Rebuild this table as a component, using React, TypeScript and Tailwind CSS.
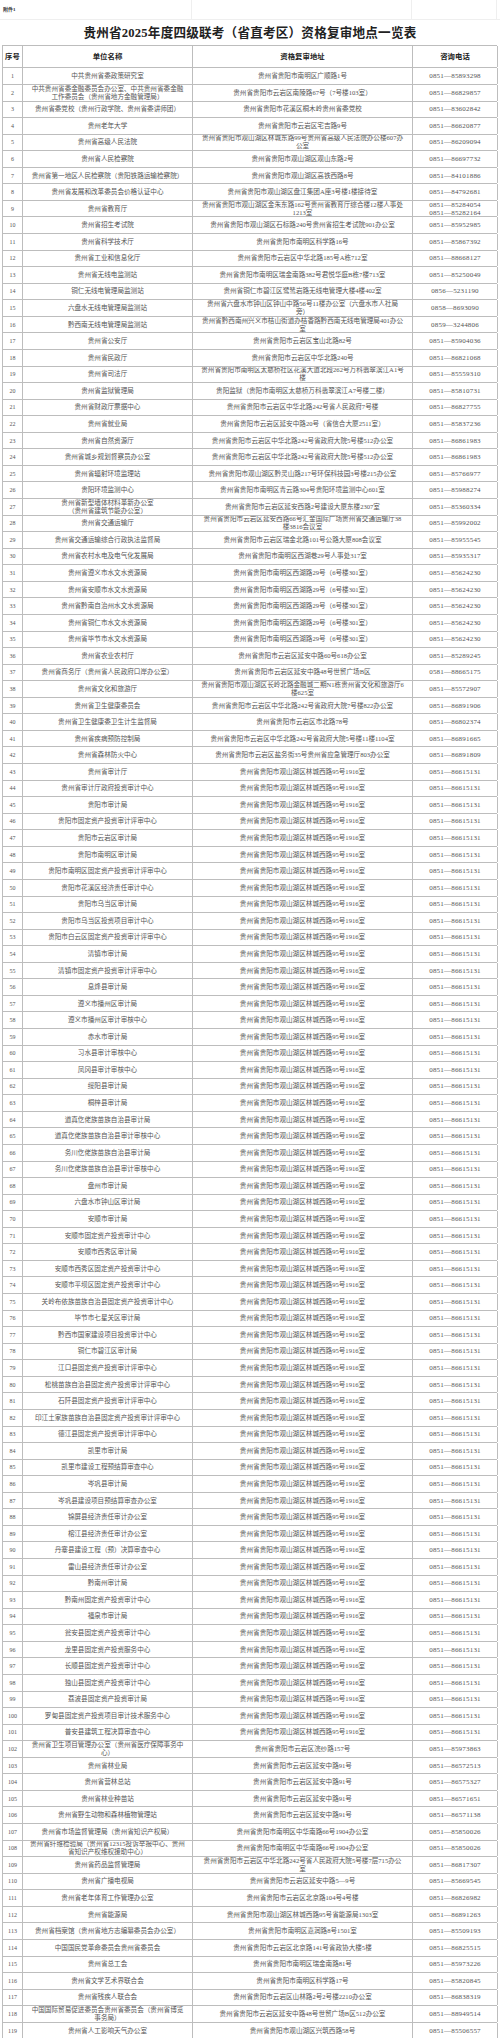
import type { ReactNode } from 'react';

type Row = [string, string, string];

const AUDIT_ADDR = '贵州省贵阳市观山湖区林城西路95号1916室';
const AUDIT_TEL = '0851—86615131';
const WATER_ADDR = '贵州省贵阳市南明区西湖路29号（6号楼301室）';
const FOREST_ADDR = '贵州省贵阳市云岩区延安中路91号';

// 43–101 share the provincial audit office address
const AUDIT_UNITS = [
  '贵州省审计厅',
  '贵州省审计厅政府投资审计中心',
  '贵阳市审计局',
  '贵阳市固定资产投资审计评审中心',
  '贵阳市云岩区审计局',
  '贵阳市南明区审计局',
  '贵阳市南明区固定资产投资审计评审中心',
  '贵阳市花溪区经济责任审计中心',
  '贵阳市乌当区审计局',
  '贵阳市乌当区投资项目审计中心',
  '贵阳市白云区固定资产投资审计评审中心',
  '清镇市审计局',
  '清镇市固定资产投资审计评审中心',
  '息烽县审计局',
  '遵义市播州区审计局',
  '遵义市播州区审计审核中心',
  '赤水市审计局',
  '习水县审计审核中心',
  '凤冈县审计审核中心',
  '绥阳县审计局',
  '桐梓县审计局',
  '道真仡佬族苗族自治县审计局',
  '道真仡佬族苗族自治县审计审核中心',
  '务川仡佬族苗族自治县审计局',
  '务川仡佬族苗族自治县审计审核中心',
  '盘州市审计局',
  '六盘水市钟山区审计局',
  '安顺市审计局',
  '安顺市固定资产投资审计中心',
  '安顺市西秀区审计局',
  '安顺市西秀区固定资产投资审计中心',
  '安顺市平坝区固定资产投资审计中心',
  '关岭布依族苗族自治县固定资产投资审计中心',
  '毕节市七星关区审计局',
  '黔西市国家建设项目投资审计中心',
  '铜仁市碧江区审计局',
  '江口县固定资产投资审计评审中心',
  '松桃苗族自治县固定资产投资审计评审中心',
  '石阡县固定资产投资审计评审中心',
  '印江土家族苗族自治县固定资产投资审计评审中心',
  '德江县固定资产投资审计评审中心',
  '凯里市审计局',
  '凯里市建设工程预结算审查中心',
  '岑巩县审计局',
  '岑巩县建设项目预结算审查办公室',
  '锦屏县经济责任审计办公室',
  '榕江县经济责任审计办公室',
  '丹寨县建设工程（预）决算审查中心',
  '雷山县经济责任审计办公室',
  '黔南州审计局',
  '黔南州固定资产投资审计中心',
  '福泉市审计局',
  '瓮安县固定资产投资审计中心',
  '龙里县固定资产投资服务中心',
  '长顺县固定资产投资审计中心',
  '独山县固定资产投资审计中心',
  '荔波县固定资产投资审计局',
  '罗甸县固定资产投资项目审计技术服务中心',
  '普安县建筑工程决算审查中心',
];

const ROWS: Row[] = [
  ['中共贵州省委政策研究室', '贵州省贵阳市南明区广顺路1号', '0851—85893298'],
  ['中共贵州省委金融委员会办公室、中共贵州省委金融\n工作委员会（贵州省地方金融管理局）', '贵州省贵阳市云岩区南陵路67号（7号楼103室）', '0851—86829857'],
  ['贵州省委党校（贵州行政学院、贵州省委讲师团）', '贵州省贵阳市花溪区桐木岭贵州省委党校', '0851—83602842'],
  ['贵州老年大学', '贵州省贵阳市云岩区宅吉路9号', '0851—86620877'],
  ['贵州省高级人民法院', '贵州省贵阳市观山湖区林城东路99号贵州省高级人民法院办公楼607办\n公室', '0851—86209094'],
  ['贵州省人民检察院', '贵州省贵阳市观山湖区观山东路2号', '0851—86697732'],
  ['贵州省第一地区人民检察院（贵阳铁路运输检察院）', '贵州省贵阳市观山湖区高铁西路8号', '0851—84101886'],
  ['贵州省发展和改革委员会价格认证中心', '贵州省贵阳市观山湖区盘江集团A座3号楼1楼接待室', '0851—84792681'],
  ['贵州省教育厅', '贵州省贵阳市观山湖区金朱东路162号贵州省教育厅综合楼12楼人事处\n1213室', '0851—85284054\n0851—85282164'],
  ['贵州省招生考试院', '贵州省贵阳市观山湖区石标路240号贵州省招生考试院901办公室', '0851—85952985'],
  ['贵州省科学技术厅', '贵州省贵阳市南明区科学路16号', '0851—85867392'],
  ['贵州省工业和信息化厅', '贵州省贵阳市云岩区中华北路185号A栋712室', '0851—88668127'],
  ['贵州省无线电监测站', '贵州省贵阳市南明区瑞金南路382号君悦华庭B栋7楼713室', '0851—85250049'],
  ['铜仁无线电管理局监测站', '贵州省铜仁市碧江区鹭鸶岩路无线电管理大楼4楼402室', '0856—5231190'],
  ['六盘水无线电管理局监测站', '贵州省六盘水市钟山区钟山中路56号11楼办公室（六盘水市人社局\n旁）', '0858—8693090'],
  ['黔西南无线电管理局监测站', '贵州省黔西南州兴义市桔山街道办桔香路黔西南无线电管理局401办公\n室', '0859—3244806'],
  ['贵州省公安厅', '贵州省贵阳市云岩区宝山北路82号', '0851—85904036'],
  ['贵州省民政厅', '贵州省贵阳市云岩区中华北路240号', '0851—86821068'],
  ['贵州省司法厅', '贵州省贵阳市南明区太慈桥社区花溪大道北段262号万科翡翠滨江A1号\n楼', '0851—85559310'],
  ['贵州省监狱管理局', '贵阳监狱（贵阳市南明区太慈桥万科翡翠滨江A7号楼二楼）', '0851—85810731'],
  ['贵州省财政厅票据中心', '贵州省贵阳市云岩区中华北路242号省人民政府7号楼', '0851—86827755'],
  ['贵州省就业局', '贵州省贵阳市云岩区延安中路20号（省信合大厦2511室）', '0851—85837236'],
  ['贵州省自然资源厅', '贵州省贵阳市云岩区中华北路242号省政府大院5号楼512办公室', '0851—86861983'],
  ['贵州省城乡规划督察员办公室', '贵州省贵阳市云岩区中华北路242号省政府大院5号楼512办公室', '0851—86861983'],
  ['贵州省辐射环境监理站', '贵州省贵阳市观山湖区黔灵山路217号环保科技园3号楼215办公室', '0851—85766977'],
  ['贵阳环境监测中心', '贵州省贵阳市南明区青云路304号贵阳环境监测中心601室', '0851—85988274'],
  ['贵州省新型墙体材料革新办公室\n（贵州省建筑节能办公室）', '贵州省贵阳市云岩区延安西路2号建设大厦东楼2307室', '0851—85360334'],
  ['贵州省交通运输厅', '贵州省贵阳市云岩区延安西路66号汇金国际广场贵州省交通运输厅38\n楼3816会议室', '0851—85992002'],
  ['贵州省交通运输综合行政执法监督局', '贵州省贵阳市云岩区瑞金北路101号公路大厦808会议室', '0851—85955545'],
  ['贵州省农村水电及电气化发展局', '贵州省贵阳市南明区西湖巷29号人事处317室', '0851—85935317'],
  ['贵州省遵义市水文水资源局', WATER_ADDR, '0851—85624230'],
  ['贵州省安顺市水文水资源局', WATER_ADDR, '0851—85624230'],
  ['贵州省黔南自治州水文水资源局', WATER_ADDR, '0851—85624230'],
  ['贵州省铜仁市水文水资源局', WATER_ADDR, '0851—85624230'],
  ['贵州省毕节市水文水资源局', WATER_ADDR, '0851—85624230'],
  ['贵州省农业农村厅', '贵州省贵阳市云岩区延安中路60号618办公室', '0851—85289245'],
  ['贵州省商务厅（贵州省人民政府口岸办公室）', '贵州省贵阳市云岩区延安中路48号世贸广场B区', '0581—88665175'],
  ['贵州省文化和旅游厅', '贵州省贵阳市观山湖区长岭北路金融城二期N1栋贵州省文化和旅游厅6\n楼625室', '0851—85572907'],
  ['贵州省卫生健康委员会', '贵州省贵阳市云岩区中华北路242号省政府大院7号楼822办公室', '0851—86891906'],
  ['贵州省卫生健康委卫生计生监督局', '贵州省贵阳市云岩区市北路78号', '0851—86802374'],
  ['贵州省疾病预防控制局', '贵州省贵阳市云岩区中华北路242号省政府大院5号楼11楼1104室', '0851—86891665'],
  ['贵州省森林防火中心', '贵州省贵阳市云岩区盐务街35号贵州省应急管理厅803办公室', '0851—86891809'],
  ...AUDIT_UNITS.map((name): Row => [name, AUDIT_ADDR, AUDIT_TEL]),
  ['贵州省卫生项目管理办公室（贵州省医疗保障事务中\n心）', '贵州省贵阳市云岩区浣纱路157号', '0851—85973863'],
  ['贵州省林业局', FOREST_ADDR, '0851—86572513'],
  ['贵州省营林总站', FOREST_ADDR, '0851—86575327'],
  ['贵州省林业种苗站', FOREST_ADDR, '0851—86571651'],
  ['贵州省野生动物和森林植物管理站', FOREST_ADDR, '0851—86571138'],
  ['贵州省市场监督管理局（贵州省知识产权局）', '贵州省贵阳市南明区中华南路66号1904办公室', '0851—85850026'],
  ['贵州省纤维检验局（贵州省12315投诉举报中心、贵州\n省知识产权维权援助中心）', '贵州省贵阳市南明区中华南路66号1904办公室', '0851—85850026'],
  ['贵州省药品监督管理局', '贵州省贵阳市云岩区中华北路242号省人民政府大院5号楼7层715办公\n室', '0851—86817307'],
  ['贵州省广播电视局', '贵州省贵阳市云岩区延安中路5—9号', '0851—85669545'],
  ['贵州省老年体育工作管理办公室', '贵州省贵阳市云岩区北京路104号4号楼', '0851—86826982'],
  ['贵州省能源局', '贵州省贵阳市观山湖区林城西路95号省能源局1303室', '0851—86891263'],
  ['贵州省档案馆（贵州省地方志编纂委员会办公室）', '贵州省贵阳市南明区嘉润路8号1501室', '0851—85509193'],
  ['中国国民党革命委员会贵州省委员会', '贵州省贵阳市云岩区北京路141号省政协大楼5楼', '0851—86825515'],
  ['贵州省总工会', '贵州省贵阳市南明区瑞金南路81号', '0851—85973226'],
  ['贵州省文学艺术界联合会', '贵州省贵阳市南明区科学路17号', '0851—85820845'],
  ['贵州省残疾人联合会', '贵州省贵阳市云岩区山林路2号2号楼2210办公室', '0851—86838319'],
  ['中国国际贸易促进委员会贵州省委员会（贵州省博览\n事务局）', '贵州省贵阳市云岩区延安中路48号世贸广场B区512办公室', '0851—88949514'],
  ['贵州省人工影响天气办公室', '贵州省贵阳市观山湖区兴筑西路58号', '0851—85506557'],
];

const FONT = 'font-["Liberation_Serif","Noto_Sans_CJK_SC",serif]';

function Cell({ className, children }: { className: string; children: ReactNode }) {
  return (
    <div
      className={`flex shrink-0 items-center justify-center overflow-hidden whitespace-pre text-center border-r border-[#bdbdbd] ${className}`}
    >
      {children}
    </div>
  );
}

export default function App() {
  return (
    <div className={`w-[500px] bg-white ${FONT} text-[#555]`}>
      {/* sheet gridlines above the title */}
      <div className="flex h-[20px] border-b border-[#efefef]">
        <div className="flex w-[192px] items-center border-r border-[#efefef] pl-[3px] text-[5px] font-bold text-[#333]">
          附件1
        </div>
        <div className="w-[220px] border-r border-[#efefef]" />
        <div className="w-[85px] border-r border-[#efefef]" />
      </div>

      {/* title */}
      <div className="flex h-[25px] items-center justify-center">
        <h1 className="pt-[1px] text-[12.6px] font-bold tracking-[0.2px] text-[#222]">
          贵州省2025年度四级联考（省直考区）资格复审地点一览表
        </h1>
      </div>

      <div className="ml-[2px] w-[495px] border-l border-t border-[#bdbdbd]">
        {/* header */}
        <div className="flex h-[22.4px] border-b border-[#bdbdbd] text-[7.4px] font-bold text-[#222]">
          <Cell className="w-[20px]">序号</Cell>
          <Cell className="w-[170px]">单位名称</Cell>
          <Cell className="w-[220px]">资格复审地址</Cell>
          <Cell className="w-[85px]">咨询电话</Cell>
        </div>

        {/* rows */}
        {ROWS.map(([name, addr, tel], index) => (
          <div key={index} className="flex h-[16.57px] border-b border-[#bdbdbd] text-[6.6px] leading-[8px]">
            <Cell className="w-[20px] text-[6px]">{index + 1}</Cell>
            <Cell className="w-[170px]">{name}</Cell>
            <Cell className="w-[220px]">{addr}</Cell>
            <Cell className="w-[85px] text-[7px] tracking-[0.2px]">{tel}</Cell>
          </div>
        ))}
      </div>
    </div>
  );
}
